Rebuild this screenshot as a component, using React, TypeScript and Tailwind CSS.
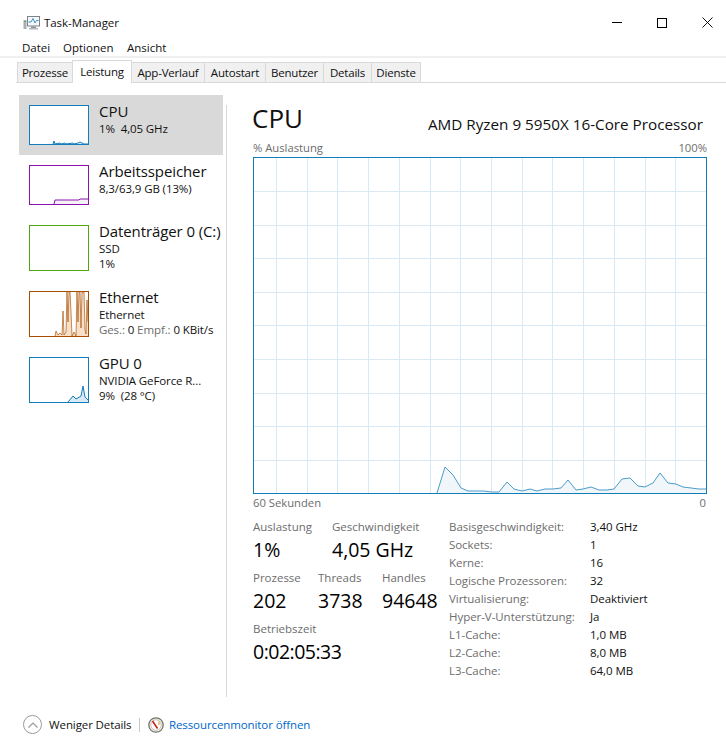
const font = "font-['Open_Sans','Noto_Sans',sans-serif]";

const tabs = [
  { name: 'Prozesse', cls: 'w-[55px] h-[20px] bg-[#f0f0f0] border border-b-0 border-r-0' },
  { name: 'Leistung', cls: 'w-[60px] h-[23px] -mb-px bg-white border border-b-0 z-10' },
  { name: 'App-Verlauf', cls: 'w-[73px] h-[20px] bg-[#f0f0f0] border-t border-r' },
  { name: 'Autostart', cls: 'w-[61px] h-[20px] bg-[#f0f0f0] border-t border-r' },
  { name: 'Benutzer', cls: 'w-[58px] h-[20px] bg-[#f0f0f0] border-t border-r' },
  { name: 'Details', cls: 'w-[48px] h-[20px] bg-[#f0f0f0] border-t border-r' },
  { name: 'Dienste', cls: 'w-[49px] h-[20px] bg-[#f0f0f0] border-t border-r' },
];

const cpuPoints = '437,493 445,467 453,475 461,488 468,491 483,491 492,492 499,492 507,482 514,489 522,491 530,489 537,491 545,489 553,489 561,488 568,480 576,490 583,489 591,487 599,490 607,490 614,489 622,479 630,478 638,486 645,487 653,483 660,473 668,483 676,484 683,487 691,488 699,489 706,489';

const details = [
  ['Basisgeschwindigkeit:', '3,40 GHz'],
  ['Sockets:', '1'],
  ['Kerne:', '16'],
  ['Logische Prozessoren:', '32'],
  ['Virtualisierung:', 'Deaktiviert'],
  ['Hyper-V-Unterstützung:', 'Ja'],
  ['L1-Cache:', '1,0 MB'],
  ['L2-Cache:', '8,0 MB'],
  ['L3-Cache:', '64,0 MB'],
];

function Thumb({ color, fill, points, tall, soft }: { color: string; fill: string; points?: string; tall?: boolean; soft?: boolean }) {
  const vh = tall ? 44 : 38;
  return (
    <div className={`w-[60px] ${tall ? 'h-[46px]' : 'h-[40px]'} shrink-0 bg-white border`} style={{ borderColor: color }}>
      {points && (
        <svg viewBox={`0 0 58 ${vh}`} className="w-full h-full block">
          <polygon points={`${points} 58,${vh} 0,${vh}`} fill={fill} />
          <polyline points={points} fill="none" stroke={color} strokeWidth="1" strokeOpacity={soft ? 0.65 : 1} />
        </svg>
      )}
    </div>
  );
}

function CpuChart() {
  const vertical = [276, 307, 337, 368, 399, 430, 460, 491, 522, 552, 583, 614, 645, 675];
  const horizontal = [191, 225, 258, 292, 325, 359, 393, 426, 460];
  return (
    <svg viewBox="253 157 454 338" className="w-[454px] h-[338px] block">
      <rect x="253" y="157" width="454" height="338" fill="#fff" />
      {vertical.map((x) => (
        <line key={x} x1={x + 0.5} x2={x + 0.5} y1="157" y2="494" stroke="#d9eaf4" />
      ))}
      {horizontal.map((y) => (
        <line key={y} y1={y + 0.5} y2={y + 0.5} x1="253" x2="707" stroke="#d9eaf4" />
      ))}
      <polygon points={`${cpuPoints} 706,494 437,494`} fill="#f1f6fa" />
      <polyline points={cpuPoints} fill="none" stroke="#4a9ccc" strokeWidth="1" />
      <rect x="253.5" y="157.5" width="453" height="336" fill="none" stroke="#117dbb" />
    </svg>
  );
}

function AppIcon() {
  return (
    <svg viewBox="0 0 17 16" className="w-[17px] h-[16px]">
      <rect x="0.5" y="5" width="3" height="9" fill="#a9aeb2" />
      <rect x="1" y="6" width="2" height="1" fill="#58b24a" />
      <rect x="4.5" y="1.5" width="12" height="9.5" fill="#f4f8fb" stroke="#7d8388" />
      <polyline points="5.5,7 8,7 10,3.5 12,8 13.5,5.5 15.5,5.5" fill="none" stroke="#3f93c9" strokeWidth="1" />
      <rect x="8" y="11.5" width="5" height="1.5" fill="#8f9498" />
      <rect x="6" y="13" width="9" height="1.5" fill="#b3b7ba" />
    </svg>
  );
}

function ResourceIcon() {
  return (
    <svg viewBox="0 0 16 16" className="w-[16px] h-[16px]">
      <circle cx="8" cy="8" r="7.2" fill="#f3f1ec" stroke="#77736b" strokeWidth="1.3" />
      <circle cx="8" cy="8" r="5.2" fill="#fff" stroke="#bdb9b0" strokeWidth="0.8" />
      <line x1="4.5" y1="4" x2="9.5" y2="11.5" stroke="#c8201c" strokeWidth="1.6" />
      <line x1="11" y1="4.5" x2="11" y2="8" stroke="#e08a2c" strokeWidth="1" />
    </svg>
  );
}

function Stat({ label, value, className = '', valueClass = '' }: { label: string; value: string; className?: string; valueClass?: string }) {
  return (
    <div className={className}>
      <div className="text-[11.5px] leading-[16px] text-[#6d6d6d] whitespace-nowrap">{label}</div>
      <div className={`text-[19.5px] leading-[26px] mt-[2px] text-black whitespace-nowrap ${valueClass}`}>{value}</div>
    </div>
  );
}

export default function App() {
  return (
    <div className={`${font} w-[726px] h-[748px] bg-white text-[#111] overflow-hidden flex flex-col`}>
      {/* title bar */}
      <div className="h-[38px] flex items-center pl-[23px] pt-[7px]">
        <AppIcon />
        <span className="ml-[4px] text-[11.5px] tracking-[-0.05px]">Task-Manager</span>
        <div className="ml-auto flex items-center gap-[35px] pr-[13px]">
          <div className="w-[10px] h-px bg-black" />
          <div className="w-[10px] h-[10px] border border-black" />
          <svg viewBox="0 0 11 11" className="w-[11px] h-[11px]">
            <path d="M0.5 0.5L10.5 10.5M10.5 0.5L0.5 10.5" stroke="#111" fill="none" />
          </svg>
        </div>
      </div>
      {/* menu */}
      <div className="h-[18px] flex items-center pl-[22px] pt-[2px] text-[11.5px]">
        <span className="w-[41px]">Datei</span>
        <span className="w-[64px]">Optionen</span>
        <span>Ansicht</span>
      </div>
      <div className="h-[2px] bg-[#f0f0f0]" />
      {/* tabs */}
      <div className="h-[25px] flex items-end border-b border-[#d9d9d9] ml-[16px] -mb-px">
        <div className="flex items-end pl-px">
          {tabs.map((t) => (
            <div key={t.name} className={`${t.cls} border-[#d9d9d9] text-[11.5px] tracking-[-0.2px] flex items-center justify-center`}>
              {t.name}
            </div>
          ))}
        </div>
      </div>
      {/* body */}
      <div className="flex pt-[13px]">
        <div className="w-[204px] ml-[19px] shrink-0 text-[11.5px] tracking-[-0.1px]">
          <div className="h-[60px] bg-[#d9d9d9] flex items-start pt-[10px] pl-[10px] gap-[10px]">
            <Thumb color="#117dbb" fill="#d9eaf4" points="23,38 24,35 25,38 30,37 31,38 35,37 36,38 43,37 44,38 48,37 50,36 52,37 54,38 58,38" />
            <div className="-mt-[2px]">
              <div className="text-[15px] leading-[16px] mb-[2px] tracking-normal">CPU</div>
              <div className="leading-[16px] whitespace-pre">1%  4,05 GHz</div>
            </div>
          </div>
          <div className="h-[60px] flex items-start pt-[10px] pl-[10px] gap-[10px]">
            <Thumb color="#8b12ae" fill="#f4f2f4" points="24,38 25,34 49,34 50,33 58,33" />
            <div className="-mt-[2px]">
              <div className="text-[15px] leading-[16px] mb-[2px] whitespace-nowrap">Arbeitsspeicher</div>
              <div className="leading-[15px]">8,3/63,9 GB (13%)</div>
            </div>
          </div>
          <div className="h-[66px] flex items-start pt-[10px] pl-[10px] gap-[10px]">
            <Thumb color="#4da60c" fill="#fff" tall />
            <div className="-mt-[2px]">
              <div className="text-[15px] leading-[16px] mb-[2px] whitespace-nowrap">Datenträger 0 (C:)</div>
              <div className="leading-[15px]">SSD</div>
              <div className="leading-[16px]">1%</div>
            </div>
          </div>
          <div className="h-[66px] flex items-start pt-[10px] pl-[10px] gap-[10px]">
            <Thumb color="#a74f01" fill="#f8dfc9" tall soft points="25,44 26,39 28,43 30,41 32,43 33,19 34,43 36,40 37,0 38,30 39,0 40,0 41,20 42,44 44,40 46,44 47,0 48,30 49,0 50,0 51,36 52,0 54,0 55,38 56,42 57,8 58,30" />
            <div className="-mt-[2px]">
              <div className="text-[15px] leading-[16px] mb-[2px]">Ethernet</div>
              <div className="leading-[15px]">Ethernet</div>
              <div className="leading-[16px] whitespace-nowrap">
                <span className="text-[#6d6d6d]">Ges.:</span> 0 <span className="text-[#6d6d6d]">Empf.:</span> 0 KBit/s
              </div>
            </div>
          </div>
          <div className="h-[66px] flex items-start pt-[10px] pl-[10px] gap-[10px]">
            <Thumb color="#117dbb" fill="#d9eaf4" tall points="38,44 43,38 46,41 51,38 53,28 55,39 58,42" />
            <div className="-mt-[2px]">
              <div className="text-[15px] leading-[16px] mb-[2px]">GPU 0</div>
              <div className="leading-[15px] whitespace-nowrap">NVIDIA GeForce R...</div>
              <div className="leading-[16px] whitespace-pre">9%  (28 °C)</div>
            </div>
          </div>
        </div>
        <div className="w-px h-[592px] mt-[10px] ml-[3px] bg-[#d9d9d9]" />
        <div className="w-[454px] ml-[26px] flex flex-col">
          <div className="h-[47px] flex items-center justify-between pr-[4px]">
            <span className="text-[26px] leading-[32px] -ml-[1px] pb-[2px]">CPU</span>
            <span className="text-[15.25px] leading-[20px] pt-[11px]">AMD Ryzen 9 5950X 16-Core Processor</span>
          </div>
          <div className="h-[13px] flex items-center justify-between text-[11.25px] text-[#6d6d6d]">
            <span>% Auslastung</span>
            <span>100%</span>
          </div>
          <div className="mt-[2px]">
            <CpuChart />
          </div>
          <div className="h-[16px] flex items-center justify-between text-[11.25px] text-[#6d6d6d]">
            <span>60 Sekunden</span>
            <span className="pr-px">0</span>
          </div>
          <div className="flex mt-[7px]">
            <div className="w-[196px] shrink-0 pt-px">
              <div className="flex">
                <Stat label="Auslastung" value="1%" className="w-[79px]" />
                <Stat label="Geschwindigkeit" value="4,05 GHz" />
              </div>
              <div className="flex mt-[7px]">
                <Stat label="Prozesse" value="202" className="w-[65px]" />
                <Stat label="Threads" value="3738" className="w-[64px]" />
                <Stat label="Handles" value="94648" />
              </div>
              <Stat label="Betriebszeit" value="0:02:05:33" className="mt-[7px]" valueClass="tracking-[-0.5px]" />
            </div>
            <div className="text-[11.5px] tracking-[-0.05px]">
              {details.map(([label, value]) => (
                <div key={label} className="h-[18px] flex items-center">
                  <span className="w-[141px] text-[#6d6d6d] whitespace-nowrap">{label}</span>
                  <span>{value}</span>
                </div>
              ))}
            </div>
          </div>
        </div>
      </div>
      {/* footer */}
      <div className="flex items-center pl-[23px] mt-[18px] text-[11.5px] tracking-[-0.1px]">
        <div className="w-[19px] h-[19px] rounded-full border border-[#9a9a9a] flex items-center justify-center">
          <svg viewBox="0 0 10 6" className="w-[10px] h-[6px]">
            <path d="M0.5 5.5L5 1L9.5 5.5" fill="none" stroke="#9a9a9a" strokeWidth="1.2" />
          </svg>
        </div>
        <span className="ml-[7px] w-[90px] whitespace-nowrap">Weniger Details</span>
        <div className="w-px h-[14px] bg-[#c8c8c8]" />
        <div className="ml-[8px]"><ResourceIcon /></div>
        <span className="ml-[5px] text-[#0066cc] whitespace-nowrap">Ressourcenmonitor öffnen</span>
      </div>
    </div>
  );
}
